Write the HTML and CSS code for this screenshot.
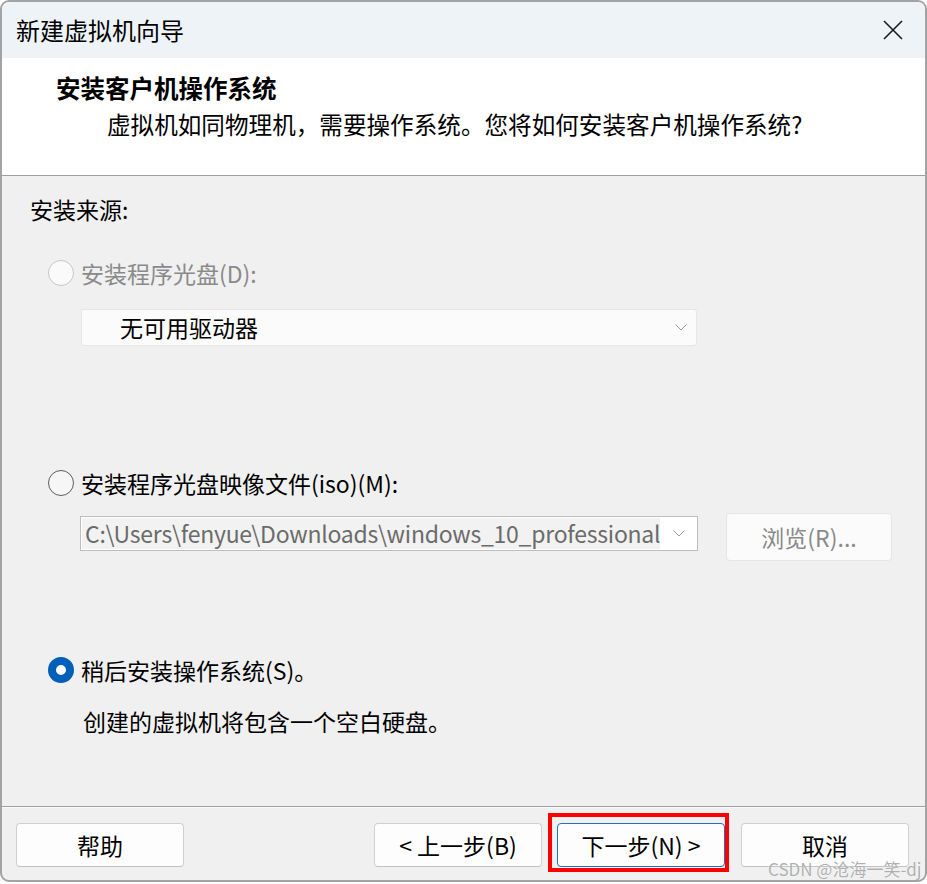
FILE: index.html
```html
<!DOCTYPE html>
<html lang="zh-CN">
<head>
<meta charset="utf-8">
<title>新建虚拟机向导</title>
<link rel="stylesheet" href="styles.css">
</head>
<body>
<div class="window">
  <div class="titlebar">
    <span class="title">新建虚拟机向导</span>
    <svg class="close" width="20" height="20" viewBox="0 0 20 20"><path d="M1 1 L19 19 M19 1 L1 19" stroke="#1a1a1a" stroke-width="1.6" fill="none"/></svg>
  </div>
  <div class="header">
    <div class="heading">安装客户机操作系统</div>
    <div class="subtitle">虚拟机如同物理机，需要操作系统。您将如何安装客户机操作系统?</div>
  </div>
  <div class="content">
    <div class="section-label">安装来源:</div>

    <div class="radio-row row-disc">
      <span class="radio radio-disabled"></span>
      <span class="label disabled">安装程序光盘(D):</span>
    </div>
    <div class="select select-disabled">
      <span class="select-text">无可用驱动器</span>
      <svg class="chev" width="12" height="7" viewBox="0 0 12 7"><polyline points="0.5,0.5 6,6 11.5,0.5" fill="none" stroke="#9a9a9a" stroke-width="1"/></svg>
    </div>

    <div class="radio-row row-iso">
      <span class="radio"></span>
      <span class="label">安装程序光盘映像文件(iso)(M):</span>
    </div>
    <div class="iso-row">
      <div class="combo">
        <div class="combo-text">C:\Users\fenyue\Downloads\windows_10_professional_x64.iso</div>
        <svg class="chev" width="12" height="7" viewBox="0 0 12 7"><polyline points="0.5,0.5 6,6 11.5,0.5" fill="none" stroke="#9a9a9a" stroke-width="1"/></svg>
      </div>
      <div class="browse">浏览(R)...</div>
    </div>

    <div class="radio-row row-later">
      <span class="radio radio-checked"></span>
      <span class="label">稍后安装操作系统(S)。</span>
    </div>
    <div class="note">创建的虚拟机将包含一个空白硬盘。</div>
  </div>
  <div class="footer">
    <div class="btn">帮助</div>
    <div class="spacer"></div>
    <div class="btn">&lt; 上一步(B)</div>
    <div class="btn btn-default">下一步(N) &gt;<span class="mark"></span></div>
    <div class="btn">取消</div>
  </div>
</div>
<div class="watermark">CSDN @沧海一笑-dj</div>
</body>
</html>
```
FILE: styles.css
```css
html, body {
  margin: 0;
  padding: 0;
  background: #ffffff;
}
body {
  width: 927px;
  height: 884px;
  overflow: hidden;
  position: relative;
  font-family: "Noto Sans CJK SC", "Noto Sans", sans-serif;
  color: #000;
}
.window {
  box-sizing: border-box;
  width: 927px;
  height: 882px;
  border: 2px solid #a3a3a3;
  border-radius: 9px;
  overflow: hidden;
  background: #f0f0f0;
  display: flex;
  flex-direction: column;
}
.titlebar {
  height: 56px;
  background: #eef3f7;
  display: flex;
  align-items: center;
  justify-content: space-between;
  padding: 0 22px 0 14px;
  flex: none;
}
.title {
  font-size: 24px;
  line-height: 56px;
}
.close {
  display: block;
}
.header {
  box-sizing: border-box;
  height: 118px;
  background: #ffffff;
  border-bottom: 1px solid #a0a0a0;
  padding: 12px 0 0 54px;
  flex: none;
}
.heading {
  font-size: 24.5px;
  font-weight: 700;
  line-height: 36px;
}
.subtitle {
  font-size: 23.6px;
  line-height: 36px;
  margin-left: 51px;
}
.content {
  height: 630px;
  box-sizing: border-box;
  padding: 17px 0 0 28px;
  flex: none;
  font-size: 23px;
}
.section-label {
  line-height: 32px;
}
.radio-row {
  display: flex;
  align-items: center;
  height: 32px;
  margin-left: 18px;
  gap: 7px;
}
.row-disc { margin-top: 32px; }
.row-iso { margin-top: 121px; }
.row-later { margin-top: 93px; }
.radio {
  box-sizing: border-box;
  width: 26px;
  height: 26px;
  border-radius: 50%;
  border: 1.5px solid #5c5c5c;
  background: #f6f6f6;
  flex: none;
}
.radio-disabled {
  border-color: #c6c6c6;
  background: #fafafa;
}
.radio-checked {
  border: 8px solid #005fb8;
  background: #ffffff;
}
.label {
  line-height: 32px;
}
.disabled {
  color: #8a8a8a;
}
.select {
  box-sizing: border-box;
  margin: 20px 0 0 51px;
  width: 616px;
  height: 37px;
  display: flex;
  align-items: center;
  justify-content: space-between;
  padding: 0 9px 0 38px;
  border-radius: 3px;
}
.select-disabled {
  background: #fbfbfb;
  border: 1px solid #e6e6e6;
}
.select-text {
  line-height: 35px;
}
.iso-row {
  display: flex;
  align-items: flex-start;
  margin: 14px 0 0 50px;
  gap: 28px;
}
.combo {
  box-sizing: border-box;
  width: 618px;
  height: 35px;
  margin-top: 3px;
  background: #ffffff;
  border: 1px solid #bdbdbd;
  display: flex;
  align-items: center;
  padding: 1px 9px 1px 1px;
  gap: 13px;
}
.combo-text {
  width: 578px;
  height: 31px;
  background: #f2f2f2;
  color: #6b6b6b;
  line-height: 31px;
  padding-left: 3px;
  white-space: nowrap;
  overflow: hidden;
  font-size: 23px;
  letter-spacing: -0.25px;
  box-sizing: border-box;
  flex: none;
}
.chev {
  display: block;
  flex: none;
}
.browse {
  box-sizing: border-box;
  width: 166px;
  height: 48px;
  background: #fbfbfb;
  border: 1px solid #e5e5e5;
  border-radius: 4px;
  color: #8a8a8a;
  display: flex;
  align-items: center;
  justify-content: center;
}
.note {
  margin: 19px 0 0 53px;
  line-height: 32px;
}
.footer {
  flex: 1;
  border-top: 1px solid #a0a0a0;
  box-shadow: inset 0 1px 0 #fbfbfb;
  display: flex;
  align-items: flex-start;
  padding: 16px 16px 0 14px;
  gap: 16px;
}
.spacer {
  flex: 1;
}
.btn {
  box-sizing: border-box;
  width: 168px;
  height: 44px;
  background: #fdfdfd;
  border: 1px solid #d0d0d0;
  border-bottom-color: #c2c2c2;
  border-radius: 4px;
  display: flex;
  align-items: center;
  justify-content: center;
  font-size: 23px;
  position: relative;
}
.btn-default {
  border: 1px solid #1f6fc4;
  margin-left: -1px;
}
.mark {
  position: absolute;
  left: -10px;
  top: -11px;
  right: -5px;
  bottom: -6px;
  border: 4px solid #ff0000;
  pointer-events: none;
}
.watermark {
  position: absolute;
  left: 768px;
  top: 858px;
  font-size: 17px;
  line-height: 22px;
  color: rgba(150, 150, 150, 0.75);
  text-shadow: 0 0 1px rgba(255, 255, 255, 0.9);
  white-space: nowrap;
  font-family: "Noto Sans CJK SC", "Noto Sans", sans-serif;
}
```
